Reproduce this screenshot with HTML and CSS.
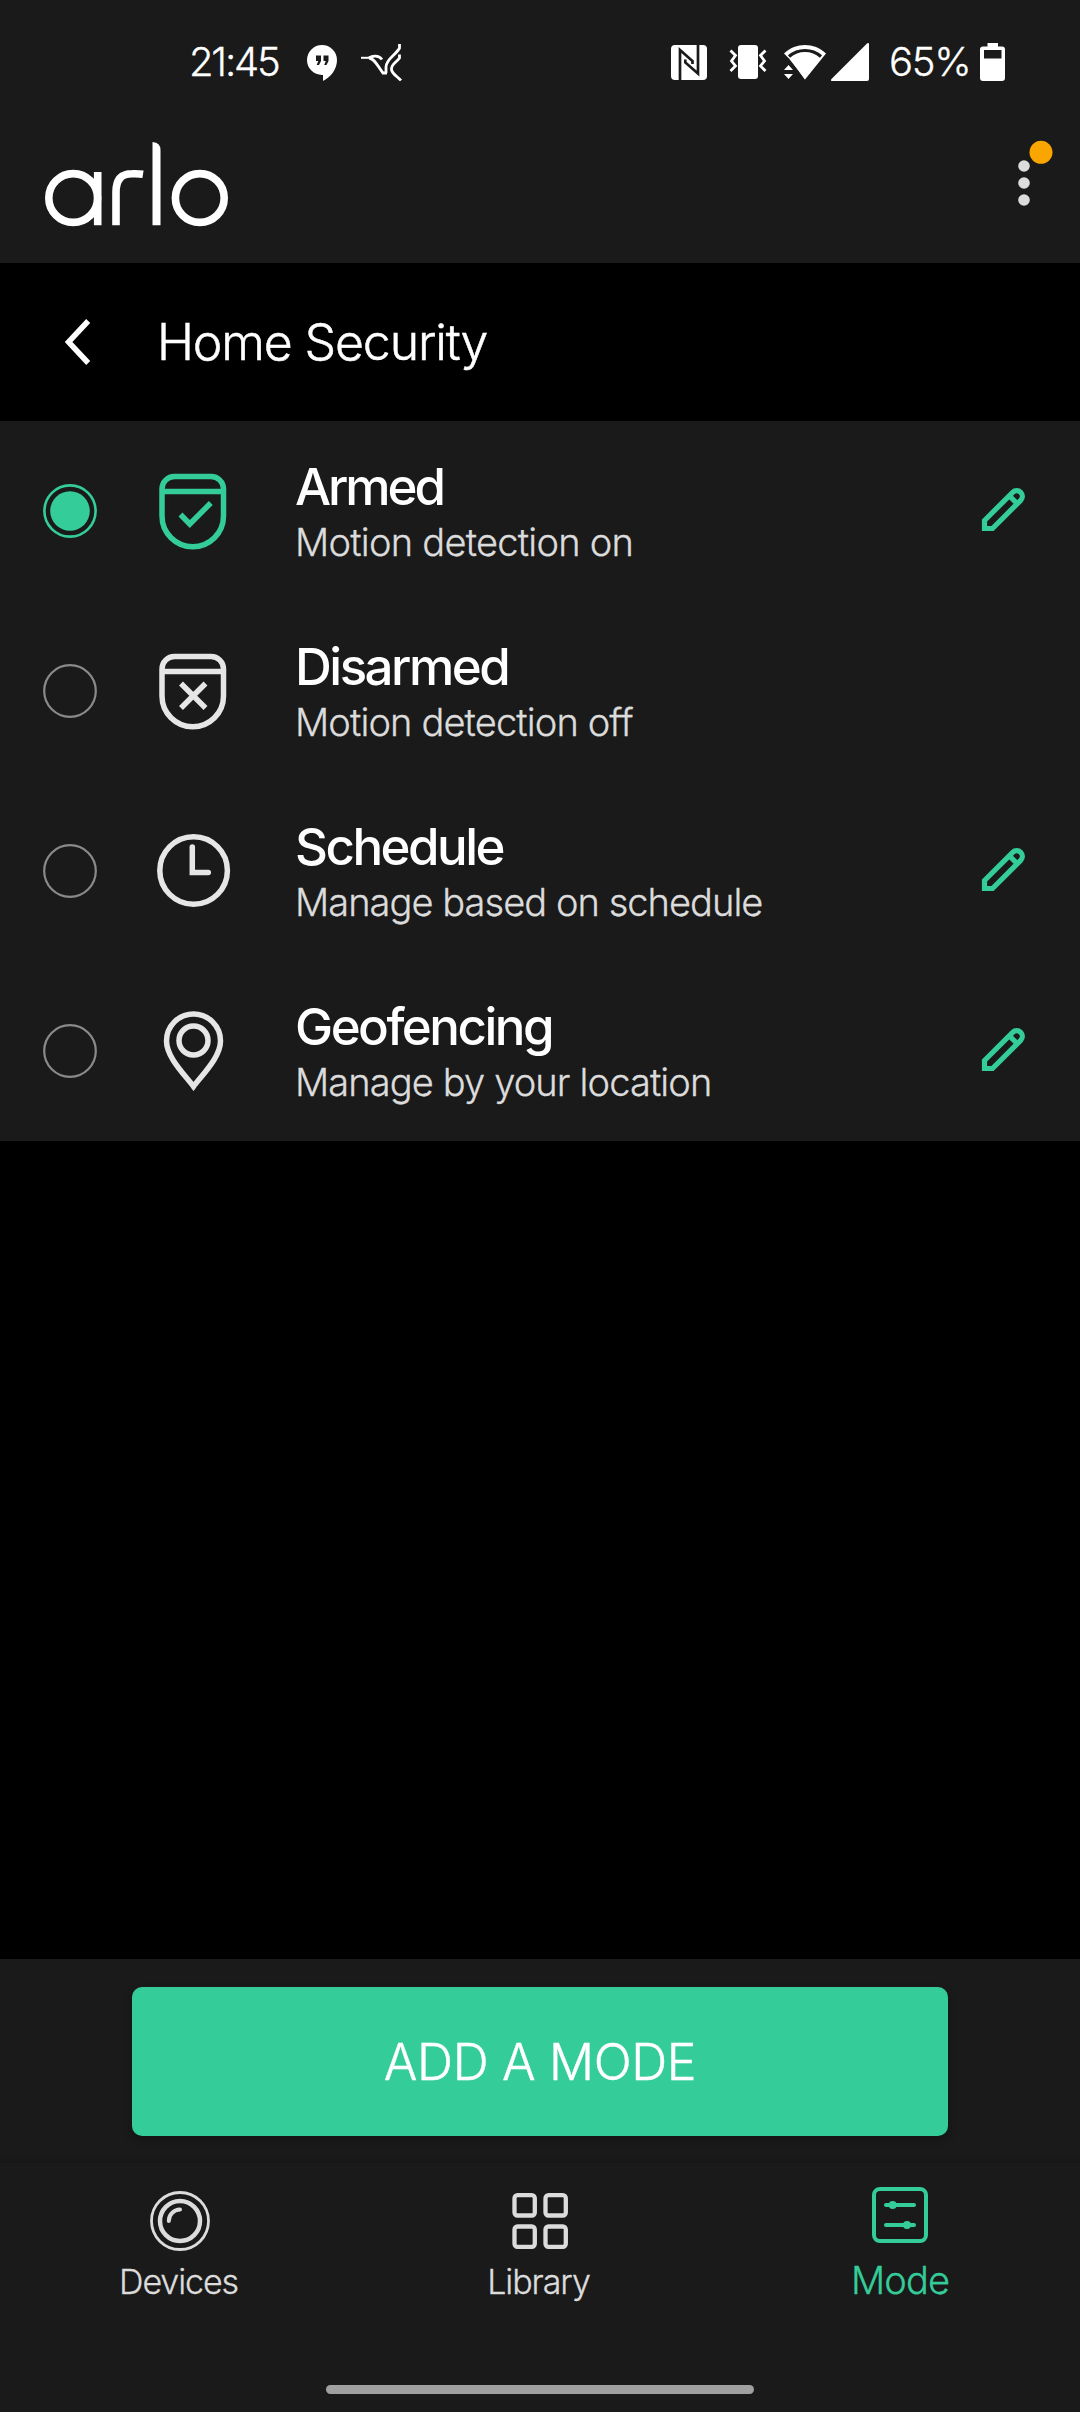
FILE: index.html
```html
<!DOCTYPE html>
<html lang="en">
<head>
<meta charset="utf-8">
<title>Arlo – Home Security</title>
<link rel="stylesheet" href="styles.css">
</head>
<body>
<svg class="sprite" width="0" height="0" aria-hidden="true">
  <symbol id="shield" viewBox="0 0 80 80">
    <path d="M9 18a12.500 12.500 0 0 1 12.500-12.500h36.500a12.500 12.500 0 0 1 12.500 12.500v27a30.700 30.700 0 0 1-61.500 0z M9 20.500h61.500"/>
  </symbol>
  <symbol id="pencil" viewBox="0 0 44 44">
    <path fill="none" stroke="currentColor" stroke-width="5.200" d="M3.500 40.500V32.500L31.700 4.300a5.400 5.400 0 0 1 8 8L11.500 40.500z M28.500 8l7.500 7.500"/>
    <path fill="currentColor" d="M1 43v-9l9 9z"/>
  </symbol>
</svg>
<div class="screen">
  <header class="top">
    <div class="status">
      <div class="status-left">
        <span class="clock">21:45</span>
        <svg class="hangouts" width="30" height="36" viewBox="0 0 30 36"><path fill="#fff" d="M15 0a15 15 0 0 1 15 15c0 9-6 17-14 21v-6h-1A15 15 0 0 1 15 0z"/><path fill="#1a1a1a" d="M9 10.500h5v5.500l-2 4H9.700l1.600-4H9zM16.500 10.500h5v5.500l-2 4h-2.300l1.600-4h-2.300z"/></svg>
        <svg class="bird" width="42" height="37" viewBox="0 0 42 37" fill="none" stroke="#fff" stroke-width="2.800"><path stroke-width="2" d="M0 13.800h9"/><path d="M8 14c3.500-2.500 9.500-3 13 1.500M8 14c6 .5 9 9 14 15h4"/><path d="M38.500 0v4C35 11 25 15 25 23v6M38.500 10.500V14C36 18 30 20 30.500 25.500 31 30 36 32 40 36.500"/></svg>
      </div>
      <div class="status-right">
        <svg width="36" height="35" viewBox="0 0 36 35"><rect width="36" height="35" rx="4" fill="#fff"/><path fill="none" stroke="#1a1a1a" stroke-width="2.700" d="M9 35V5l12.500 11v3M27 0v28.500L14.300 17.500v-3"/></svg>
        <svg class="vibrate" width="38" height="34" viewBox="0 0 38 34"><rect x="9" width="20" height="34" rx="3" fill="#fff"/><path fill="none" stroke="#fff" stroke-width="2.800" d="M1.500 5.500l5 5-4 5.500 4 5-5 5M36.500 5.500l-5 5 4 5.500-4 5 5 5"/></svg>
        <svg class="wifi" width="42" height="35" viewBox="0 0 42 35"><path fill="#fff" d="M0 8.500C12-2.800 30-2.800 42 8.500L21 34.500 5 13.500z"/><path fill="none" stroke="#1a1a1a" stroke-width="3.200" d="M5 11.500c9-8 23-8 32 0"/><path fill="#1a1a1a" d="M0 18h8l7 9v8H0z"/><path fill="#fff" d="M10 18l11 16.500V18zM0 25h9l-4.500-5zM0 29h9l-4.500 5z"/></svg>
        <svg class="signal" width="38" height="38" viewBox="0 0 38 38"><path fill="#fff" d="M36 .5q2-1.500 2 1V36q0 2-2 2H1.500q-2.500 0-1-2z"/></svg>
        <span class="percent">65%</span>
        <svg class="battery" width="25" height="38" viewBox="0 0 25 38"><path fill="#fff" fill-rule="evenodd" d="M7.500 0h10.500v3.500h4a3 3 0 0 1 3 3V35a3 3 0 0 1-3 3H3a3 3 0 0 1-3-3V6.500a3 3 0 0 1 3-3h4.500zM4 7v8.500h17.500V7z"/></svg>
      </div>
    </div>
    <div class="brand">
      <svg class="logo" role="img" aria-label="arlo" width="184" height="86" viewBox="0 0 184 86" fill="none" stroke="#fff" stroke-width="7.600"><circle cx="28.200" cy="56" r="24.400"/><path d="M52.700 30v53.200M71 83.200V50C71 38 76 31.800 87 31.800q6-.3 11 .5"/><circle cx="154.800" cy="56" r="24.400"/><path fill="#fff" stroke="none" d="M107.500 0q8 .5 8 8v75.200h-8z"/></svg>
      <svg class="more" width="38" height="70" viewBox="0 0 38 70"><g fill="#dcdcdc"><circle cx="9" cy="26" r="5.800"/><circle cx="9" cy="43" r="5.800"/><circle cx="9" cy="60" r="5.800"/></g><circle cx="26" cy="12.300" r="11.500" fill="#faa500"/></svg>
    </div>
  </header>

  <div class="titlebar">
    <svg class="back" width="26" height="46" viewBox="0 0 26 46" fill="none" stroke="#fff" stroke-width="5.500"><path d="M23.200 2L3.500 23l19.700 21"/></svg>
    <h1 class="title">Home Security</h1>
  </div>

  <main class="modes">
    <section class="mode selected">
      <svg class="radio" width="54" height="54" viewBox="0 0 54 54"><circle cx="27" cy="27" r="25.600" fill="none" stroke="currentColor" stroke-width="2.600"/><circle cx="27" cy="27" r="19.800" fill="currentColor"/></svg>
      <svg class="icon" width="80" height="80" viewBox="0 0 80 80"><use href="#shield"/><path d="M27.500 43.500l9.300 9.500 21-21"/></svg>
      <div class="text"><h2 class="name armed">Armed</h2><p class="desc d1">Motion detection on</p></div>
      <svg class="edit" width="44" height="44"><use href="#pencil"/></svg>
    </section>
    <section class="mode">
      <svg class="radio" width="54" height="54" viewBox="0 0 54 54"><circle cx="27" cy="27" r="25.800" fill="none" stroke="currentColor" stroke-width="2.200"/></svg>
      <svg class="icon" width="80" height="80" viewBox="0 0 80 80"><use href="#shield"/><path d="M28 32.500l24.500 24.500M52.500 32.500L28 57"/></svg>
      <div class="text"><h2 class="name">Disarmed</h2><p class="desc d2">Motion detection off</p></div>
    </section>
    <section class="mode">
      <svg class="radio" width="54" height="54" viewBox="0 0 54 54"><circle cx="27" cy="27" r="25.800" fill="none" stroke="currentColor" stroke-width="2.200"/></svg>
      <svg class="icon" width="80" height="80" viewBox="0 0 80 80"><circle cx="40.600" cy="39.500" r="33.800"/><path stroke-linecap="round" d="M39.300 16v25.500h16"/></svg>
      <div class="text"><h2 class="name">Schedule</h2><p class="desc d3">Manage based on schedule</p></div>
      <svg class="edit" width="44" height="44"><use href="#pencil"/></svg>
    </section>
    <section class="mode">
      <svg class="radio" width="54" height="54" viewBox="0 0 54 54"><circle cx="27" cy="27" r="25.800" fill="none" stroke="currentColor" stroke-width="2.200"/></svg>
      <svg class="icon" width="80" height="80" viewBox="0 0 80 80"><path d="M40.500 75.500C31 63 13.500 46 13.500 30a27 27 0 0 1 54 0c0 16-17.500 33-27 45.500z"/><circle cx="40.500" cy="29.500" r="14.500"/></svg>
      <div class="text"><h2 class="name">Geofencing</h2><p class="desc d4">Manage by your location</p></div>
      <svg class="edit" width="44" height="44"><use href="#pencil"/></svg>
    </section>
  </main>

  <div class="action"><button class="add"><span>ADD A MODE</span></button></div>

  <nav class="tabs">
    <a class="tab">
      <svg width="60" height="60" viewBox="0 0 60 60" fill="none" stroke="currentColor"><circle cx="30" cy="30" r="28.500" stroke-width="2.800"/><circle cx="30" cy="30" r="20" stroke-width="4.500"/><path stroke-width="4" stroke-linecap="round" d="M18.800 30c0-6 4.500-11.200 11.200-11.500"/></svg>
      <span class="label">Devices</span>
    </a>
    <a class="tab">
      <svg width="60" height="60" viewBox="0 0 60 60" fill="none" stroke="currentColor" stroke-width="4.300"><rect x="4.500" y="4.200" width="20.300" height="20.300" rx="3"/><rect x="35.500" y="4.200" width="20.300" height="20.300" rx="3"/><rect x="4.500" y="35.500" width="20.300" height="20.300" rx="3"/><rect x="35.500" y="35.500" width="20.300" height="20.300" rx="3"/></svg>
      <span class="label">Library</span>
    </a>
    <a class="tab active">
      <svg width="60" height="60" viewBox="0 0 60 60" fill="none" stroke="currentColor" stroke-width="4"><rect x="4" y="4" width="52" height="52" rx="6"/><path stroke-linecap="round" d="M16 20h28M16 40h28"/><circle cx="22.700" cy="20" r="4" fill="currentColor" stroke="none"/><circle cx="37" cy="40" r="4" fill="currentColor" stroke="none"/></svg>
      <span class="label">Mode</span>
    </a>
  </nav>
  <div class="gesture"><div class="handle"></div></div>
</div>
</body>
</html>
```
FILE: styles.css
```css
* { box-sizing: border-box; margin: 0; padding: 0; }
body { background: #000; color: #fff; font-family: Inter, "Liberation Sans", sans-serif; font-weight: 300; }
svg { display: block; flex: none; }
.sprite { position: absolute; }
.screen { width: 1080px; height: 2412px; display: flex; flex-direction: column; background: #000; }
span, h1, h2, p { white-space: nowrap; }

.top { height: 263px; background: #1a1a1a; }
.status { height: 124px; display: flex; justify-content: space-between; align-items: center; padding: 0 75px 0 189px; }
.status-left, .status-right { display: flex; align-items: center; }
.clock, .percent { font-size: 40px; line-height: 48px; -webkit-text-stroke: 0.3px; }
.clock { width: 118px; letter-spacing: -2.2px; }
.hangouts { margin-top: 2px; }
.bird { margin-left: 24px; }
.vibrate { margin-left: 22px; }
.wifi { margin-left: 17px; }
.signal { margin-left: 5px; }
.percent { width: 91px; margin-left: 20px; letter-spacing: -1.3px; }
.brand { display: flex; justify-content: space-between; align-items: flex-start; padding: 16px 27px 0 45px; }
.logo { margin-top: 2px; }

.titlebar { height: 158px; display: flex; align-items: center; padding-left: 65px; }
.title { margin-left: 66px; font-size: 50px; line-height: 60px; font-weight: 300; letter-spacing: -1.15px; -webkit-text-stroke: 0.5px; }

.modes { background: #1a1a1a; }
.mode { height: 180px; display: flex; align-items: center; padding: 0 55px 0 43px; color: #8a8a8a; }
.mode.selected { color: #34cd9a; }
.icon { margin-left: 56px; fill: none; stroke: #e6e6e6; stroke-width: 5.5; }
.selected .icon { stroke: #34cd9a; }
.text { flex: 1; align-self: flex-start; margin-left: 62px; padding-top: 38px; }
.name { color: #fff; font-size: 51px; line-height: 56px; font-weight: 500; letter-spacing: -2.5px; }
.armed { letter-spacing: -3.1px; }
.desc { margin-top: 5px; color: #dcdcdc; font-size: 38px; line-height: 44px; letter-spacing: -0.87px; -webkit-text-stroke: 0.3px; }
.d1 { letter-spacing: -0.75px; }
.d3 { letter-spacing: -0.95px; }
.edit { color: #34cd9a; margin-top: -2px; }

.action { margin-top: auto; height: 204px; padding: 28px 132px 0; background: #1a1a1a; }
.add { width: 816px; height: 149px; border: 0; border-radius: 10px; background: #34cd9a; color: #fff; font-family: inherit; font-weight: 300; font-size: 50px; letter-spacing: -0.35px; -webkit-text-stroke: 0.4px; box-shadow: 0 4px 8px rgba(0, 0, 0, .25); }
.tabs { height: 177px; display: grid; grid-template-columns: repeat(3, 1fr); background: #1a1a1a; box-shadow: 0 -2px 5px rgba(0, 0, 0, .15); }
.tab { display: flex; flex-direction: column; align-items: center; padding-top: 28px; color: #dcdcdc; }
.label { margin: 11px 3px 0 0; font-size: 34px; line-height: 40px; letter-spacing: -1.1px; -webkit-text-stroke: 0.3px; }
.tab.active { padding-top: 22px; color: #34cd9a; }
.active .label { margin: 12px 0 0; font-size: 38px; line-height: 46px; letter-spacing: -0.9px; }
.gesture { height: 72px; padding-top: 45px; background: #1a1a1a; }
.handle { width: 428px; height: 9px; margin: 0 auto; border-radius: 5px; background: #a0a0a0; }
```
